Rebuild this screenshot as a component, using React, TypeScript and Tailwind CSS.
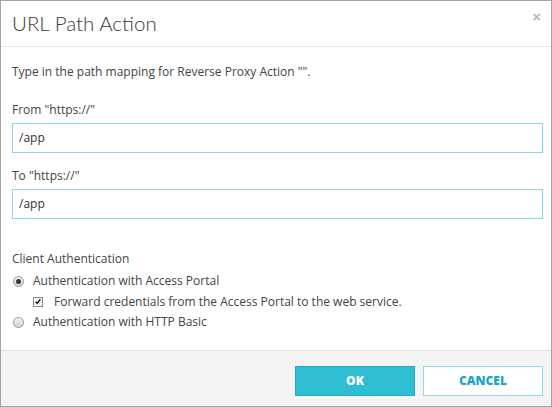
import type { ReactElement } from 'react';

const body = "font-['Open_Sans',sans-serif] text-[12px] leading-[20px] text-[#444]";

function Radio({ checked }: { checked?: boolean }): ReactElement {
  return (
    <span className="flex h-[11px] w-[11px] items-center justify-center rounded-full border border-[#9a9a9a] bg-gradient-to-b from-[#f2f2f2] to-[#d4d4d4]">
      {checked ? <span className="h-[5px] w-[5px] rounded-full bg-[#333]" /> : null}
    </span>
  );
}

function Checkbox(): ReactElement {
  return (
    <span className="flex h-[10px] w-[10px] items-center justify-center border border-[#8a8a8a] bg-[#f4f4f4]">
      <svg viewBox="0 0 10 10" className="h-[9px] w-[9px]">
        <path d="M2 5.2 L4 7.3 L8 2.2" fill="none" stroke="#222" strokeWidth="1.8" />
      </svg>
    </span>
  );
}

export default function App(): ReactElement {
  return (
    <div className="flex h-[407px] w-[552px] flex-col border border-[#a3a3a3] bg-white">
      <header className="flex h-[46px] items-center justify-between border-b border-[#e6e6e6] pl-[11px] pr-[10px]">
        <h1 className="font-['Lato',sans-serif] text-[20.5px] font-light text-[#3a3a3a]">URL Path Action</h1>
        <span className="-mt-[14px] font-['Liberation_Sans',sans-serif] text-[15px] font-bold leading-none text-[#b8b8b8]">×</span>
      </header>

      <div className={`flex-1 pl-[11px] pr-[8px] pt-[15px] ${body}`}>
        <p>Type in the path mapping for Reverse Proxy Action "".</p>

        <p className="mt-[18px]">From "https://"</p>
        <div className="mt-[3px] flex h-[30px] items-center border border-[#86d7e7] px-[6px] text-[#333]">/app</div>

        <p className="mt-[13px]">To "https://"</p>
        <div className="mt-[3px] flex h-[30px] items-center border border-[#86d7e7] px-[6px] text-[#333]">/app</div>

        <p className="mt-[30px]">Client Authentication</p>
        <div className="mt-[2px] flex flex-col leading-[20.5px]">
          <label className="flex items-center gap-[9px] pl-[1px]">
            <Radio checked />
            <span>Authentication with Access Portal</span>
          </label>
          <label className="flex items-center gap-[11px] pl-[21px]">
            <Checkbox />
            <span>Forward credentials from the Access Portal to the web service.</span>
          </label>
          <label className="flex items-center gap-[9px] pl-[1px]">
            <Radio />
            <span>Authentication with HTTP Basic</span>
          </label>
        </div>
      </div>

      <footer className="flex h-[56px] items-start justify-end gap-[8px] border-t border-[#e2e2e2] bg-[#f4f4f4] pr-[8px] pt-[15px]">
        <button className="h-[30px] w-[120px] border border-[#1fadc6] bg-[#2fbdd4] font-['Open_Sans',sans-serif] text-[12px] font-extrabold text-white">
          OK
        </button>
        <button className="h-[30px] w-[120px] border border-[#8edbea] bg-white font-['Open_Sans',sans-serif] text-[12px] font-extrabold text-[#1ba6c8]">
          CANCEL
        </button>
      </footer>
    </div>
  );
}
